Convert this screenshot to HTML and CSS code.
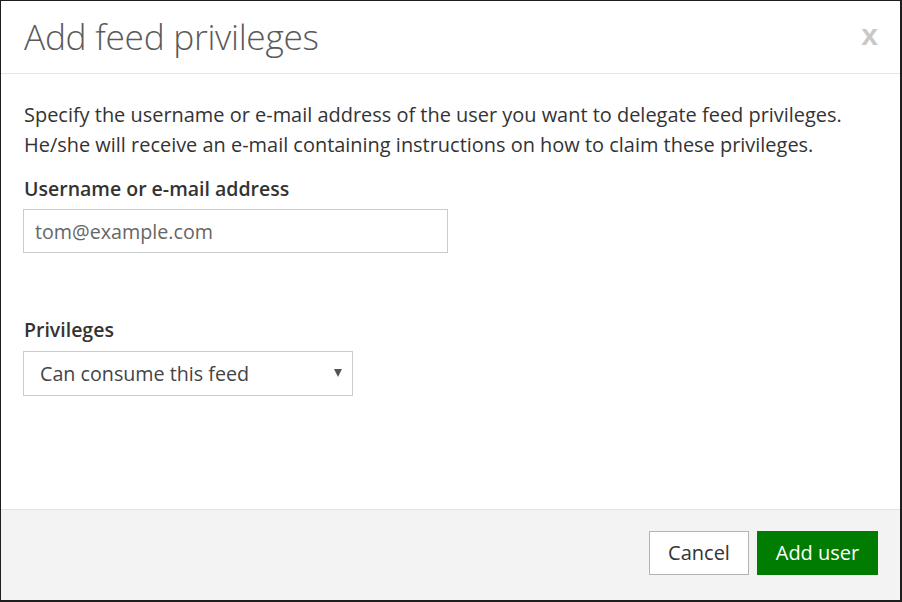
FILE: index.html
```html
<!DOCTYPE html>
<html lang="en">
<head>
<meta charset="utf-8">
<title>Add feed privileges</title>
<link rel="stylesheet" href="styles.css">
</head>
<body>
<div class="modal">
  <div class="modal-header">
    <h1 class="modal-title">Add feed privileges</h1>
    <span class="close">x</span>
  </div>
  <div class="modal-body">
    <p class="intro">Specify the username or e-mail address of the user you want to delegate feed privileges.<br>He/she will receive an e-mail containing instructions on how to claim these privileges.</p>
    <label class="field-label" for="user">Username or e-mail address</label>
    <input class="text-input" id="user" type="text" placeholder="tom@example.com">
    <label class="field-label privileges-label" for="priv">Privileges</label>
    <div class="select-wrap">
      <select class="select" id="priv">
        <option>Can consume this feed</option>
      </select>
      <svg class="select-arrow" width="8" height="8" viewBox="0 0 8 8"><path d="M0 0 H8 L4 8 Z" fill="#555"/></svg>
    </div>
  </div>
  <div class="modal-footer">
    <button class="btn btn-default">Cancel</button>
    <button class="btn btn-primary">Add user</button>
  </div>
</div>
</body>
</html>
```

FILE: styles.css
```css
html, body {
  margin: 0;
  padding: 0;
  background: #fff;
}
body {
  font-family: "Open Sans", "Noto Sans", sans-serif;
  color: #333;
}
.modal {
  box-sizing: border-box;
  width: 902px;
  height: 602px;
  border: 1px solid #1e1e1e;
  border-right-width: 2px;
  border-bottom-width: 2px;
  display: flex;
  flex-direction: column;
  background: #fff;
}
.modal-header {
  height: 72px;
  border-bottom: 1px solid #e5e5e5;
  display: flex;
  align-items: center;
  justify-content: space-between;
  padding: 0 22px 0 23px;
}
.modal-title {
  margin: 0;
  font-size: 35.3px;
  font-weight: 300;
  color: #5a5a5a;
  letter-spacing: -0.3px;
  line-height: 1;
}
.close {
  font-family: "Liberation Sans", Arial, sans-serif;
  font-weight: bold;
  font-size: 30px;
  color: #c8c8c8;
  line-height: 1;
  margin-top: -4px;
}
.modal-body {
  flex: 1;
  padding: 26px 23px 0 23px;
  display: flex;
  flex-direction: column;
  align-items: flex-start;
}
.intro {
  margin: 0;
  font-size: 19.95px;
  line-height: 30px;
  color: #333;
}
.field-label {
  display: block;
  font-size: 19.5px;
  font-weight: 600;
  line-height: 28px;
  margin-top: 15px;
  margin-bottom: 6px;
  color: #333;
}
.privileges-label {
  margin-top: 63px;
  margin-bottom: 7px;
}
.text-input {
  box-sizing: border-box;
  width: 425px;
  height: 44px;
  border: 1px solid #cccccc;
  padding: 0 11px;
  font-family: inherit;
  font-size: 19.7px;
  color: #333;
  outline: none;
  margin: 0 0 0 -1px;
}
.text-input::placeholder {
  color: #666;
  opacity: 1;
}
.select-wrap {
  position: relative;
  width: 330px;
  height: 45px;
  margin-left: -1px;
}
.select {
  appearance: none;
  -webkit-appearance: none;
  box-sizing: border-box;
  width: 100%;
  height: 100%;
  border: 1px solid #cccccc;
  border-radius: 0;
  background: #fff;
  padding: 0 16px;
  font-family: inherit;
  font-size: 19.7px;
  color: #444;
  margin: 0;
  outline: none;
}
.select-arrow {
  position: absolute;
  right: 11px;
  top: 18px;
  pointer-events: none;
}
.modal-footer {
  border-top: 1px solid #e2e2e2;
  background: #f3f3f3;
  height: 91px;
  box-sizing: border-box;
  padding: 21px 22px 0 0;
  display: flex;
  justify-content: flex-end;
  align-items: flex-start;
  gap: 8px;
}
.btn {
  box-sizing: border-box;
  height: 44px;
  font-family: inherit;
  font-size: 20px;
  padding: 0;
  margin: 0;
  cursor: pointer;
  line-height: 1;
}
.btn-default {
  width: 100px;
  background: #fff;
  border: 1px solid #b3b3b3;
  color: #333;
}
.btn-primary {
  width: 121px;
  background: #007c00;
  border: 1px solid #007c00;
  color: #fff;
}
```
